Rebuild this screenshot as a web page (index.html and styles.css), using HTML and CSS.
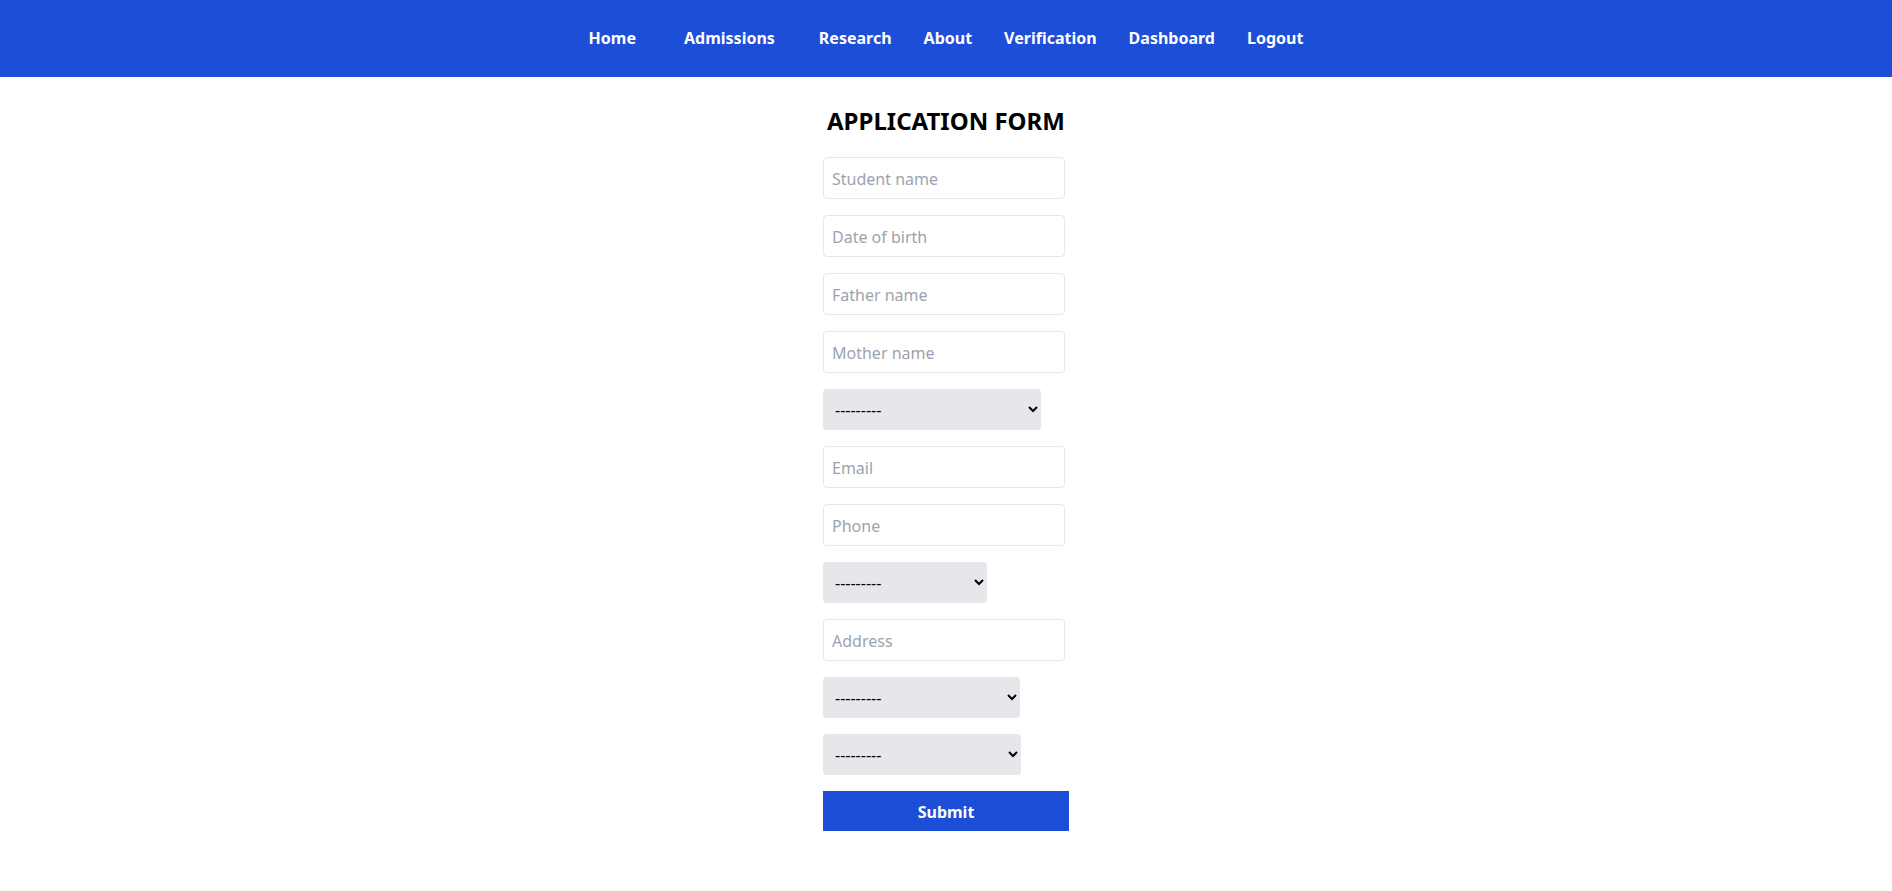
FILE: index.html
```html
<!DOCTYPE html>
<html lang="en">
<head>
<meta charset="utf-8">
<title>Application Form</title>
<link rel="stylesheet" href="styles.css">
</head>
<body>
<nav class="navbar">
  <ul class="nav-list">
    <li class="nav-item nav-item--home"><a href="#">Home</a></li>
    <li class="nav-item nav-item--admissions"><a href="#">Admissions</a></li>
    <li class="nav-item"><a href="#">Research</a></li>
    <li class="nav-item"><a href="#">About</a></li>
    <li class="nav-item"><a href="#">Verification</a></li>
    <li class="nav-item"><a href="#">Dashboard</a></li>
    <li class="nav-item"><a href="#">Logout</a></li>
  </ul>
</nav>
<main class="page">
  <h1 class="title">APPLICATION FORM</h1>
  <form class="app-form">
    <input class="field" type="text" placeholder="Student name">
    <input class="field" type="text" placeholder="Date of birth">
    <input class="field" type="text" placeholder="Father name">
    <input class="field" type="text" placeholder="Mother name">
    <select class="choice choice--a"><option>---------</option></select>
    <input class="field" type="text" placeholder="Email">
    <input class="field" type="text" placeholder="Phone">
    <select class="choice choice--b"><option>---------</option></select>
    <input class="field" type="text" placeholder="Address">
    <select class="choice choice--c"><option>---------</option></select>
    <select class="choice choice--d"><option>---------</option></select>
    <button class="submit" type="button">Submit</button>
  </form>
</main>
</body>
</html>
```
FILE: styles.css
```css
* { box-sizing: border-box; }
html, body {
  margin: 0;
  padding: 0;
  background: #ffffff;
  font-family: "Noto Sans", "Open Sans", sans-serif;
}
.navbar {
  background: #1d4ed8;
  height: 77px;
  padding-bottom: 2px;
  display: flex;
  align-items: center;
  justify-content: center;
}
.nav-list {
  list-style: none;
  margin: 0;
  padding: 0;
  display: flex;
  align-items: center;
  gap: 32px;
}
.nav-item a {
  color: #ffffff;
  text-decoration: none;
  font-weight: 700;
  font-size: 16px;
  line-height: 24px;
}
.nav-item--home { margin-right: 16px; }
.nav-item--admissions { margin-right: 12px; }
.page {
  display: flex;
  flex-direction: column;
  align-items: center;
}
.title {
  margin: 28px 0 20px;
  font-size: 24px;
  line-height: 32px;
  font-weight: 700;
  color: #000000;
  text-align: center;
}
.app-form {
  width: 246px;
  display: flex;
  flex-direction: column;
  align-items: flex-start;
  gap: 16px;
  padding-bottom: 40px;
}
.field {
  width: 242px;
  height: 42px;
  padding: 9px 8px 7px;
  font-family: inherit;
  font-size: 16px;
  line-height: 24px;
  border: 1px solid #e5e7eb;
  border-radius: 4px;
  color: #111827;
  background: #ffffff;
  margin: 0;
}
.field::placeholder { color: #9ca3af; }
.choice {
  height: 41px;
  padding: 0 8px;
  font-family: inherit;
  font-size: 16px;
  color: #000000;
  background-color: #e7e6eb;
  border: 0;
  border-radius: 4px;
  margin: 0;
}
.choice--a { width: 218px; }
.choice--b { width: 164px; }
.choice--c { width: 197px; }
.choice--d { width: 198px; }
.submit {
  width: 246px;
  height: 40px;
  margin: 0;
  padding: 1px 0 0;
  border: 0;
  background: #1d4ed8;
  color: #ffffff;
  font-family: inherit;
  font-size: 16px;
  font-weight: 700;
  cursor: pointer;
}
```
